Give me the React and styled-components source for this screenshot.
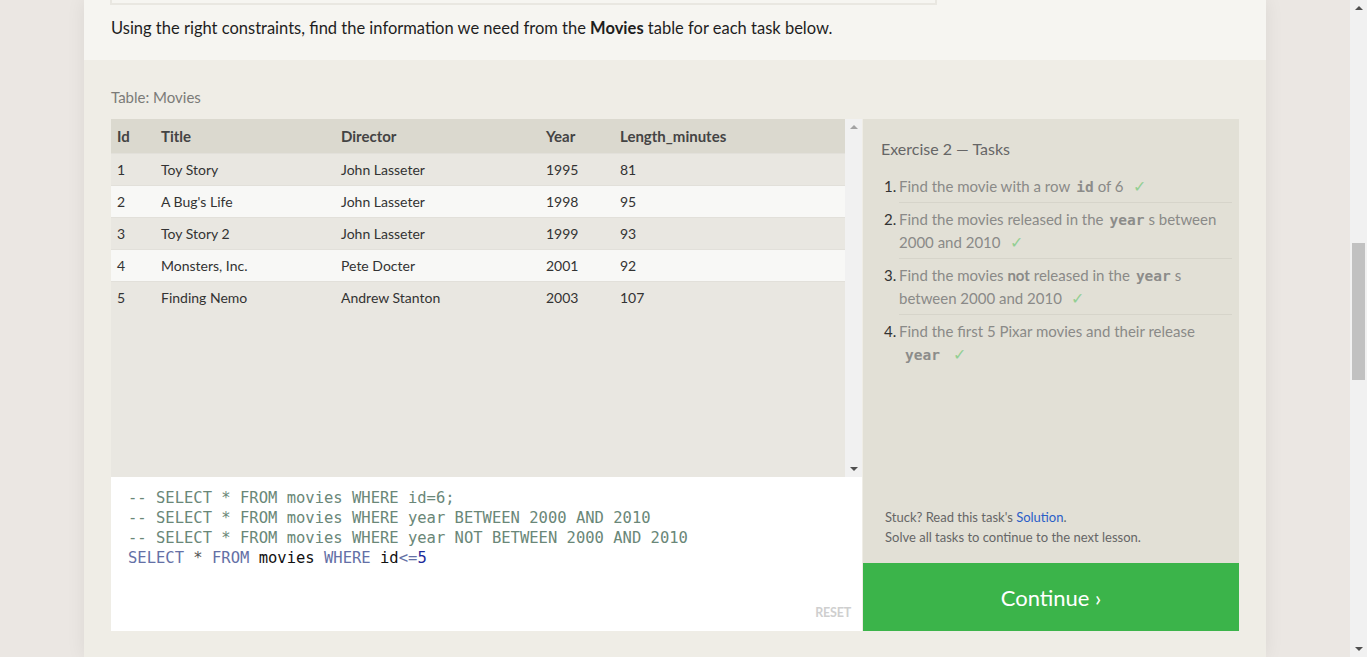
import React from "react";
import styled, { createGlobalStyle } from "styled-components";

const GlobalStyle = createGlobalStyle`
  html, body {
    margin: 0;
    padding: 0;
    height: 100%;
    overflow: hidden;
    background: #ebe7e3;
    font-family: "Lato", "Liberation Sans", sans-serif;
  }
`;

const Screen = styled.div`
  display: flex;
  height: 657px;
`;

const Page = styled.div`
  flex: 1;
  display: flex;
  justify-content: center;
`;

const Card = styled.div`
  width: 1182px;
  display: flex;
  flex-direction: column;
  box-shadow: 0 0 18px rgba(0, 0, 0, 0.07);
`;

const Intro = styled.div`
  background: #f6f5f1;
  height: 60px;
  padding: 0 27px 0 26px;
`;

const PrevBox = styled.div`
  width: 823px;
  height: 3px;
  border: 2px solid #e9e7e1;
  border-top: 0;
  background: #f6f5f1;
`;

const IntroText = styled.p`
  margin: 13px 0 0 1px;
  font-size: 16.5px;
  color: #1e1e1e;
  b {
    font-weight: 700;
  }
`;

const Exercise = styled.div`
  flex: 1;
  background: #efede6;
  padding: 28px 27px 0;
`;

const Caption = styled.div`
  font-size: 15px;
  color: #7b7b78;
  margin-bottom: 13px;
`;

const Grid = styled.div`
  display: grid;
  grid-template-columns: 751px 1fr;
  column-gap: 1px;
`;

const LeftCol = styled.div`
  display: flex;
  flex-direction: column;
`;

const TableWrap = styled.div`
  height: 358px;
  display: flex;
  background: #e9e7e1;
`;

const TableArea = styled.div`
  flex: 1;
`;

const Table = styled.table`
  width: 100%;
  border-collapse: collapse;
  table-layout: fixed;
  font-size: 14px;
  color: #333;
`;

const Th = styled.th`
  text-align: left;
  font-weight: 700;
  font-size: 15px;
  color: #444;
  background: #dbd9cf;
  height: 34px;
  padding: 0 0 0 ${(p) => p.$pad || 0}px;
  width: ${(p) => (p.$w ? p.$w + "px" : "auto")};
`;

const Tr = styled.tr`
  background: ${(p) => (p.$alt ? "#f8f8f6" : "#e9e7e1")};
  border-top: 1px solid #e2e0da;
`;

const Td = styled.td`
  height: 31px;
  padding: 0 0 0 ${(p) => p.$pad || 0}px;
`;

const InnerScroll = styled.div`
  width: 17px;
  background: #f1f1f1;
  display: flex;
  flex-direction: column;
  justify-content: space-between;
  align-items: center;
  padding: 6px 0;
`;

const Arrow = styled.div`
  width: 0;
  height: 0;
  border-left: 4px solid transparent;
  border-right: 4px solid transparent;
  ${(p) =>
    p.$down
      ? `border-top: 4px solid ${p.$dark ? "#505050" : "#a3a3a3"};`
      : `border-bottom: 4px solid ${p.$dark ? "#505050" : "#a3a3a3"};`}
`;

const Editor = styled.div`
  height: 154px;
  background: #fff;
  display: flex;
  flex-direction: column;
`;

const Code = styled.pre`
  flex: 1;
  margin: 0;
  padding: 11px 17px 0;
  font-family: "DejaVu Sans Mono", "Liberation Mono", monospace;
  font-size: 15.5px;
  line-height: 20px;
  color: #111;
`;

const Tok = styled.span`
  color: ${(p) =>
    ({
      comment: "#6a8778",
      kw: "#6470a6",
      op: "#555",
      num: "#1d2a9a",
      sym: "#6470a6",
    })[p.$t] || "#111"};
`;

const ResetRow = styled.div`
  text-align: right;
  padding: 0 11px 11px 0;
`;

const Reset = styled.span`
  font-size: 12.5px;
  font-weight: 700;
  color: #cfcfcf;
  letter-spacing: -0.2px;
`;

const Panel = styled.div`
  display: flex;
  flex-direction: column;
`;

const TaskBox = styled.div`
  flex: 1;
  background: #e2e0d6;
  padding: 20px 7px 16px 18px;
  display: flex;
  flex-direction: column;
`;

const TaskTitle = styled.div`
  font-size: 16px;
  color: #666;
  margin-bottom: 12px;
`;

const TaskList = styled.ol`
  flex: 1;
  margin: 0;
  padding: 0 0 0 18px;
  list-style: none;
`;

const Task = styled.li`
  position: relative;
  font-size: 15px;
  line-height: 23px;
  color: #8a8a88;
  padding: 5px 0 4px 0;
  border-bottom: ${(p) => (p.$last ? "none" : "1px solid #d6d4ca")};
  b {
    font-weight: 700;
  }
`;

const Num = styled.span`
  position: absolute;
  left: -15px;
  color: #333;
`;

const Mono = styled.code`
  font-family: "DejaVu Sans Mono", "Liberation Mono", monospace;
  font-weight: 700;
  font-size: 14.5px;
  line-height: 1;
  color: #8c8c8a;
  margin: 0 4px 0 6px;
`;

const Check = styled.span`
  color: #93cf93;
  margin-left: 9px;
  font-size: 16px;
  line-height: 1;
`;

const Help = styled.div`
  font-size: 13px;
  line-height: 20px;
  color: #666;
  padding-left: 4px;
  a {
    color: #2a5ec8;
    text-decoration: none;
  }
`;

const Continue = styled.button`
  height: 68px;
  border: 0;
  background: #3bb44a;
  color: #fff;
  font-family: inherit;
  font-size: 22px;
  cursor: pointer;
`;

const Scrollbar = styled.div`
  width: 17px;
  background: #f1f1f1;
  display: flex;
  flex-direction: column;
  align-items: center;
  padding: 6px 0;
`;

const Track = styled.div`
  flex: 1;
  width: 100%;
  display: flex;
  flex-direction: column;
  align-items: center;
  padding: 6px 0;
`;

const Thumb = styled.div`
  width: 13px;
  height: 137px;
  margin-top: 227px;
  background: #c1c1c1;
`;

const movies = [
  [1, "Toy Story", "John Lasseter", 1995, 81],
  [2, "A Bug's Life", "John Lasseter", 1998, 95],
  [3, "Toy Story 2", "John Lasseter", 1999, 93],
  [4, "Monsters, Inc.", "Pete Docter", 2001, 92],
  [5, "Finding Nemo", "Andrew Stanton", 2003, 107],
];

const cols = [
  { name: "Id", w: 44, pad: 6 },
  { name: "Title", w: 180 },
  { name: "Director", w: 205 },
  { name: "Year", w: 74 },
  { name: "Length_minutes" },
];

export default function App() {
  return (
    <>
      <GlobalStyle />
      <Screen>
        <Page>
          <Card>
            <Intro>
              <PrevBox />
              <IntroText>
                Using the right constraints, find the information we need from the{" "}
                <b>Movies</b> table for each task below.
              </IntroText>
            </Intro>
            <Exercise>
              <Caption>Table: Movies</Caption>
              <Grid>
                <LeftCol>
                  <TableWrap>
                    <TableArea>
                      <Table>
                        <thead>
                          <tr>
                            {cols.map((c) => (
                              <Th key={c.name} $w={c.w} $pad={c.pad}>
                                {c.name}
                              </Th>
                            ))}
                          </tr>
                        </thead>
                        <tbody>
                          {movies.map((m, i) => (
                            <Tr key={m[0]} $alt={i % 2 === 1}>
                              {m.map((v, j) => (
                                <Td key={j} $pad={cols[j].pad}>
                                  {v}
                                </Td>
                              ))}
                            </Tr>
                          ))}
                        </tbody>
                      </Table>
                    </TableArea>
                    <InnerScroll>
                      <Arrow />
                      <Arrow $down $dark />
                    </InnerScroll>
                  </TableWrap>
                  <Editor>
                    <Code>
                      <Tok $t="comment">-- SELECT * FROM movies WHERE id=6;</Tok>
                      {"\n"}
                      <Tok $t="comment">-- SELECT * FROM movies WHERE year BETWEEN 2000 AND 2010</Tok>
                      {"\n"}
                      <Tok $t="comment">
                        -- SELECT * FROM movies WHERE year NOT BETWEEN 2000 AND 2010
                      </Tok>
                      {"\n"}
                      <Tok $t="kw">SELECT</Tok> <Tok $t="op">*</Tok> <Tok $t="kw">FROM</Tok>{" "}
                      movies <Tok $t="kw">WHERE</Tok> id<Tok $t="sym">&lt;=</Tok>
                      <Tok $t="num">5</Tok>
                    </Code>
                    <ResetRow>
                      <Reset>RESET</Reset>
                    </ResetRow>
                  </Editor>
                </LeftCol>
                <Panel>
                  <TaskBox>
                    <TaskTitle>Exercise 2 — Tasks</TaskTitle>
                    <TaskList>
                      <Task>
                        <Num>1.</Num>Find the movie with a row<Mono>id</Mono>of 6
                        <Check>✓</Check>
                      </Task>
                      <Task>
                        <Num>2.</Num>Find the movies released in the<Mono>year</Mono>s between
                        2000 and 2010<Check>✓</Check>
                      </Task>
                      <Task>
                        <Num>3.</Num>Find the movies <b>not</b> released in the<Mono>year</Mono>s
                        between 2000 and 2010<Check>✓</Check>
                      </Task>
                      <Task $last>
                        <Num>4.</Num>Find the first 5 Pixar movies and their release{" "}
                        <Mono>year</Mono>
                        <Check>✓</Check>
                      </Task>
                    </TaskList>
                    <Help>
                      Stuck? Read this task's <a href="#">Solution</a>.
                      <br />
                      Solve all tasks to continue to the next lesson.
                    </Help>
                  </TaskBox>
                  <Continue>Continue ›</Continue>
                </Panel>
              </Grid>
            </Exercise>
          </Card>
        </Page>
        <Scrollbar>
          <Arrow $dark />
          <Track>
            <Thumb />
          </Track>
          <Arrow $down $dark />
        </Scrollbar>
      </Screen>
    </>
  );
}
